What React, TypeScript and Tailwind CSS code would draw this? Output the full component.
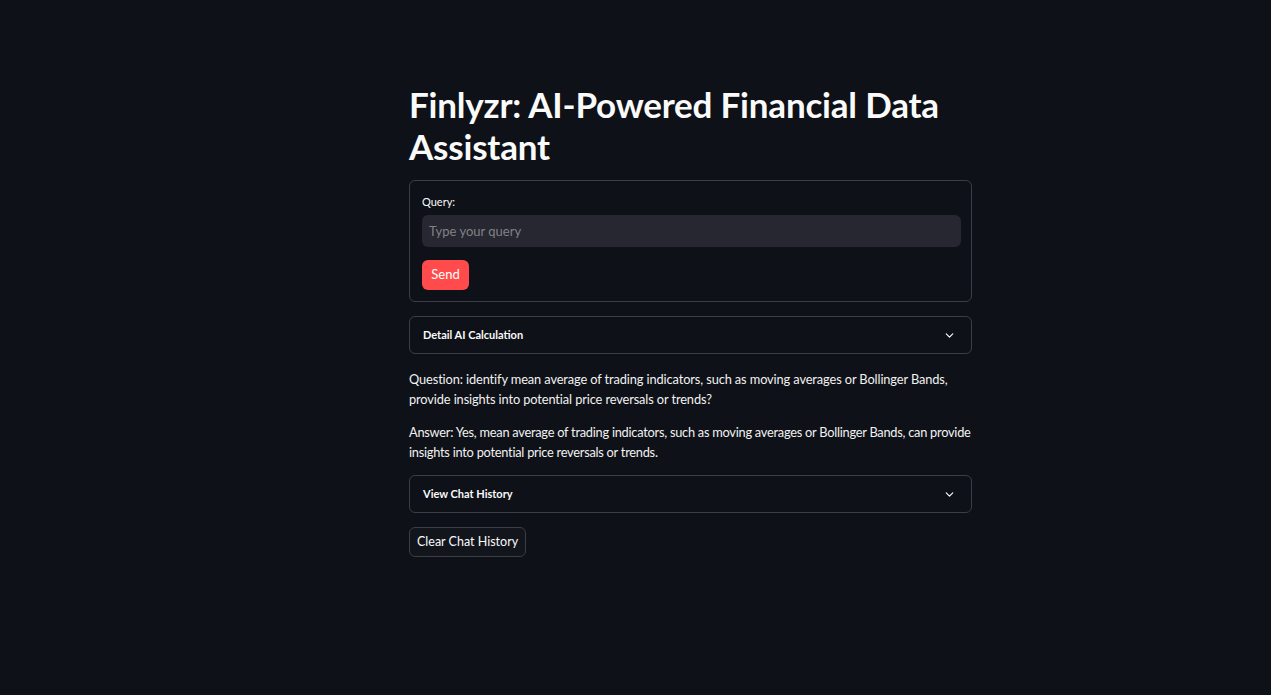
import { ChevronDown } from 'lucide-react';

const font = { fontFamily: 'Lato, "Noto Sans", sans-serif' };

function Expander({ title }: { title: string }) {
  return (
    <div className="flex h-[38px] items-center justify-between rounded-md border border-[#3b3e46] pl-[13px] pr-[15px]">
      <span className="text-[11px] font-bold text-[#fafafa]">{title}</span>
      <ChevronDown size={13} strokeWidth={2.2} className="text-[#fafafa]" />
    </div>
  );
}

export default function App() {
  return (
    <main
      className="min-h-[695px] w-full bg-[#0e1117] text-[#fafafa]"
      style={font}
    >
      <div className="ml-[409px] flex w-[563px] flex-col pt-[83px]">
        <h1 className="text-[35px] font-bold leading-[42px] tracking-[-0.2px]">
          Finlyzr: AI-Powered Financial Data Assistant
        </h1>

        <form className="mt-[13px] flex flex-col rounded-md border border-[#3b3e46] pb-[11px] pl-[12px] pr-[10px] pt-[13px]">
          <label className="text-[11px] leading-[16px] text-[#fafafa]">Query:</label>
          <input
            placeholder="Type your query"
            className="mt-[5px] h-[32px] rounded-md bg-[#262730] px-[7px] text-[13px] text-[#fafafa] placeholder:text-[#808288] focus:outline-none"
          />
          <button
            type="button"
            className="mt-[13px] h-[30px] w-[47px] rounded-md bg-[#ff4b4b] text-[13px] text-white"
          >
            Send
          </button>
        </form>

        <div className="mt-[14px]">
          <Expander title="Detail AI Calculation" />
        </div>

        <p className="mt-[15px] whitespace-nowrap text-[12.8px] leading-[20px] tracking-[-0.11px] text-[#f2f2f2]">
          Question: identify mean average of trading indicators, such as moving averages or Bollinger Bands,
          <br />
          provide insights into potential price reversals or trends?
        </p>
        <p className="mt-[13px] whitespace-nowrap text-[12.8px] leading-[20px] tracking-[-0.25px] text-[#f2f2f2]">
          Answer: Yes, mean average of trading indicators, such as moving averages or Bollinger Bands, can provide
          <br />
          insights into potential price reversals or trends.
        </p>

        <div className="mt-[13px]">
          <Expander title="View Chat History" />
        </div>

        <div className="mt-[14px]">
          <button
            type="button"
            className="h-[30px] rounded-md border border-[#3b3e46] bg-[#12151c] px-[7px] text-[12.5px] text-[#fafafa]"
          >
            Clear Chat History
          </button>
        </div>
      </div>
    </main>
  );
}
